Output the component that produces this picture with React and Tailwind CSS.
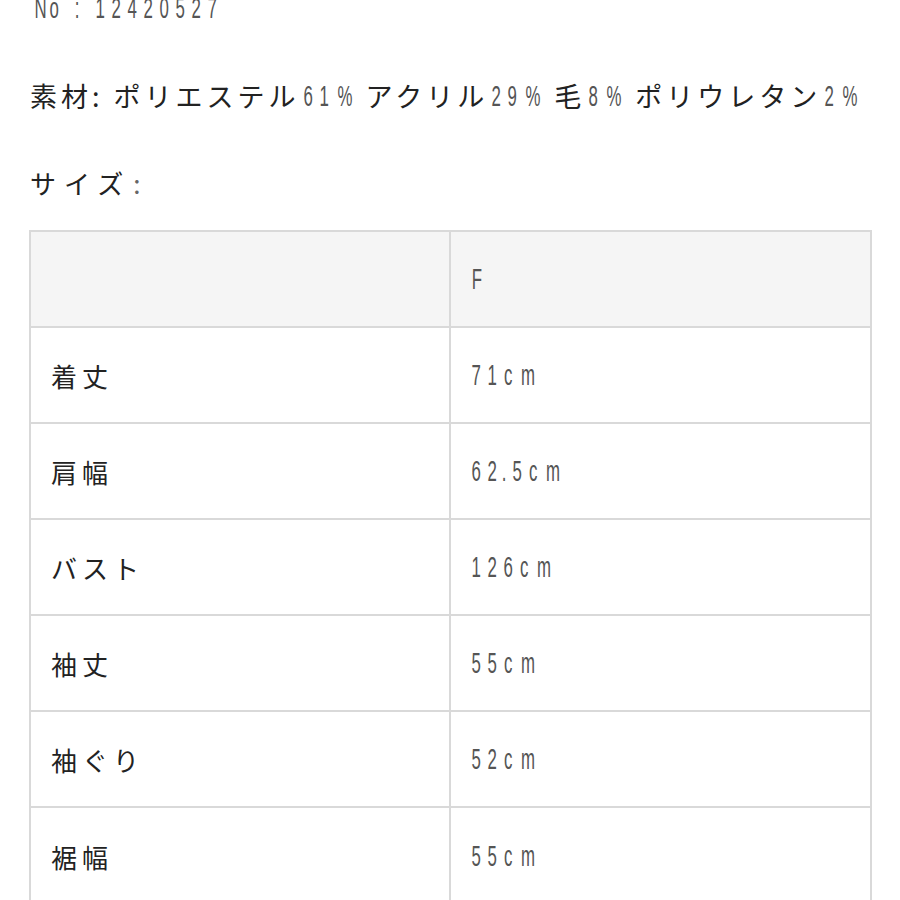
const rows = [
  ['着丈', '71cm'],
  ['肩幅', '62.5cm'],
  ['バスト', '126cm'],
  ['袖丈', '55cm'],
  ['袖ぐり', '52cm'],
  ['裾幅', '55cm'],
]

const jp = { fontFamily: '"Noto Sans CJK JP", "Noto Sans", sans-serif' }
const num = { fontFamily: '"Liberation Sans", Arial, sans-serif' }

// narrow digits: each glyph squeezed into an even-pitch box
function charWidth(c) {
  if (c === '.') return 'w-[9px]'
  if (c === '%') return 'w-[19px]'
  if (c === ' ') return 'w-[9px]'
  if (c === ':') return 'w-[12px]'
  if (c === 'm') return 'w-[18px]'
  return 'w-[16px]'
}

function Num({ children }) {
  return (
    <span style={num} className="inline-flex text-[29px] leading-none text-[#555] tracking-normal">
      {children.split('').map((c, i) => (
        <span key={i} className={`inline-block text-center ${charWidth(c)}`}>
          <span className="inline-block scale-x-[0.58]">{c === ' ' ? '\u00a0' : c}</span>
        </span>
      ))}
    </span>
  )
}

export default function App() {
  return (
    <div className="w-[900px] h-[900px] overflow-hidden bg-white text-[#222]" style={jp}>
      <div className="-mt-[12px] pl-[30px]">
        <div className="h-[40px] flex items-center">
          <Num>No : 12420527</Num>
        </div>

        <div className="mt-[48px] h-[40px] flex items-center text-[27px] tracking-[4px] whitespace-nowrap">
          <span>素材: ポリエステル</span><Num>61%</Num>
          <span className="ml-[15px]">アクリル</span><Num>29%</Num>
          <span className="ml-[15px]">毛</span><Num>8%</Num>
          <span className="ml-[15px]">ポリウレタン</span><Num>2%</Num>
        </div>

        <div className="mt-[46px] h-[40px] flex items-center text-[26px] tracking-[8px]">
          サイズ<span className="text-[#666] ml-[2px]">:</span>
        </div>
      </div>

      <div className="ml-[29px] mt-[28px] w-[843px] border-2 border-[#d9d9d9]">
        <div className="flex h-[96px] bg-[#f5f5f5] border-b-2 border-[#d9d9d9]">
          <div className="w-[420px] border-r-2 border-[#d9d9d9]" />
          <div className="flex-1 flex items-center pl-[17px]">
            <Num>F</Num>
          </div>
        </div>
        {rows.map(([label, value], i) => (
          <div
            key={i}
            className={`flex h-[96px] ${i < rows.length - 1 ? 'border-b-2 border-[#d9d9d9]' : ''}`}
          >
            <div className="w-[420px] border-r-2 border-[#d9d9d9] flex items-center pl-[20px] text-[26px] tracking-[5px]">
              {label}
            </div>
            <div className="flex-1 flex items-center pl-[17px]">
              <Num>{value}</Num>
            </div>
          </div>
        ))}
      </div>
    </div>
  )
}
